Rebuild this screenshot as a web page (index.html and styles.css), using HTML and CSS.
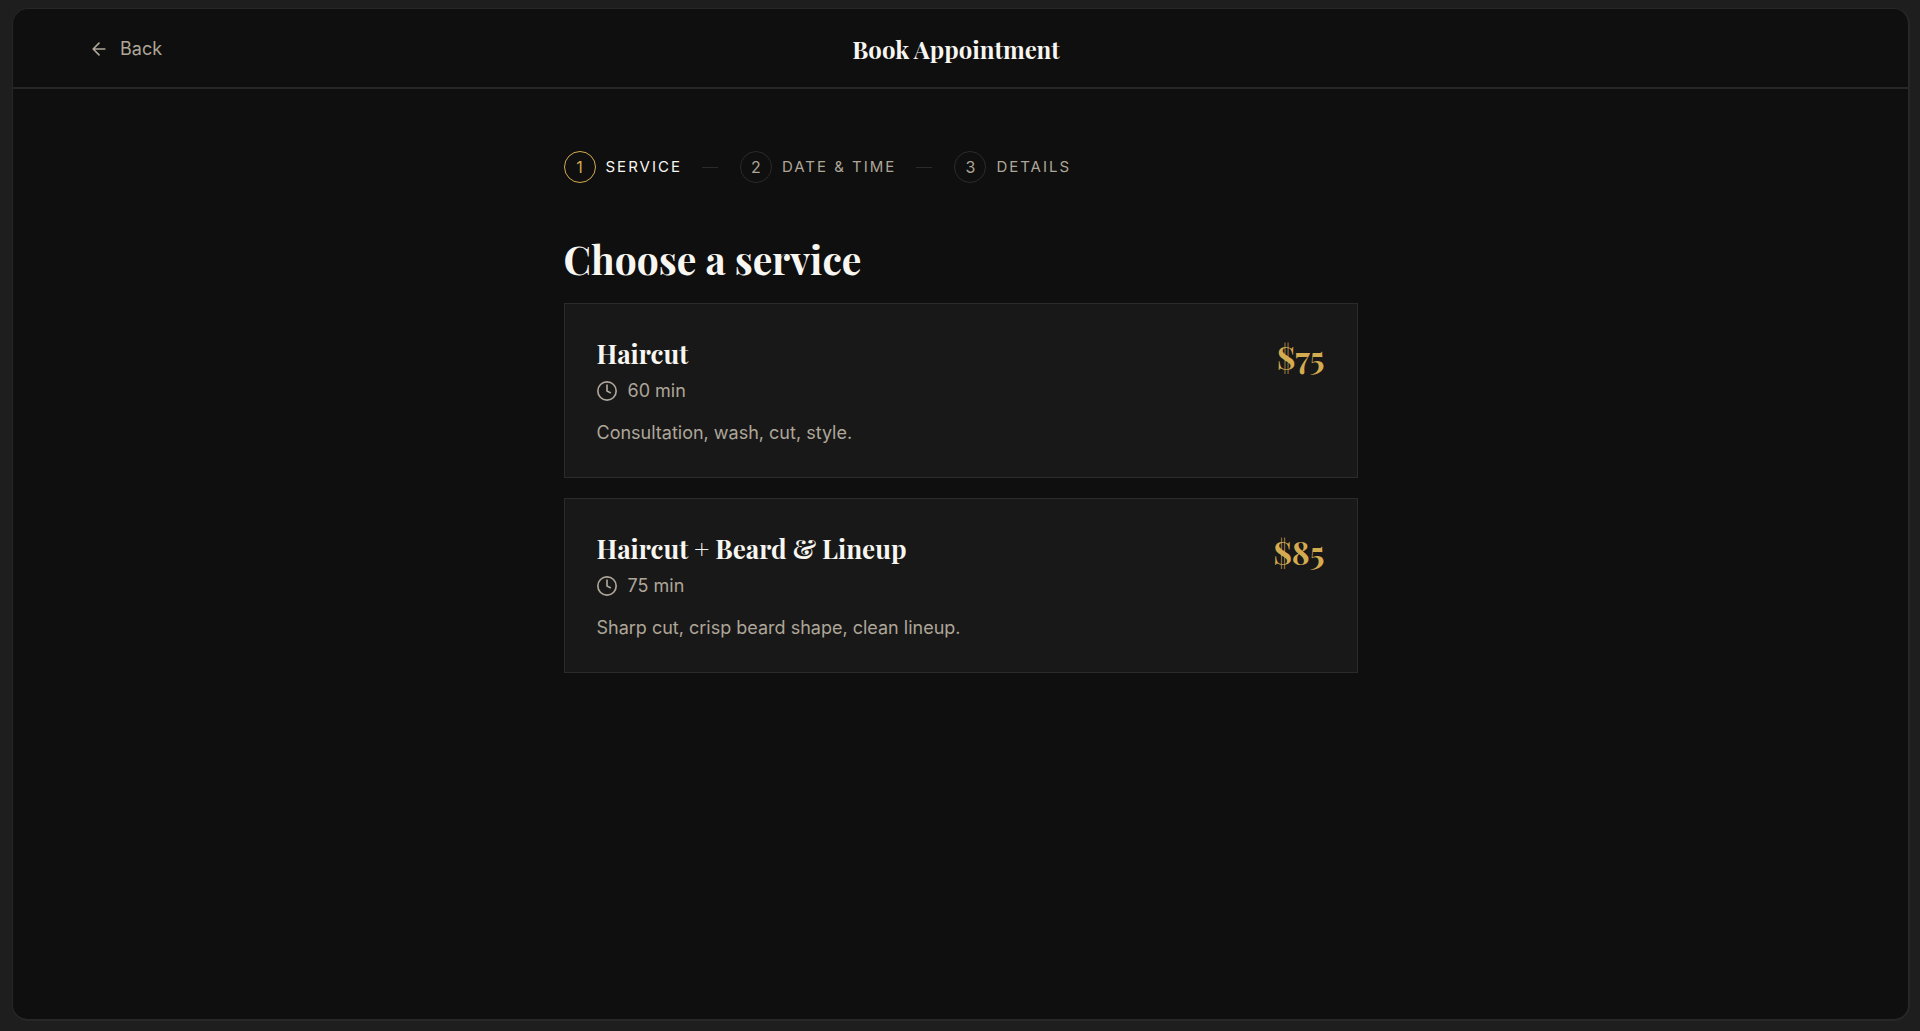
FILE: index.html
```html
<!DOCTYPE html>
<html lang="en">
<head>
<meta charset="utf-8">
<meta name="viewport" content="width=device-width, initial-scale=1">
<title>Book Appointment</title>
<link rel="stylesheet" href="styles.css">
</head>
<body>
<div class="frame">
  <header class="topbar">
    <a class="back" href="#">
      <svg class="back-icon" viewBox="0 0 24 24" aria-hidden="true"><path d="m12 19-7-7 7-7M19 12H5"/></svg>
      Back
    </a>
    <h1 class="page-title">Book Appointment</h1>
    <div class="topbar-end"></div>
  </header>
  <main class="content">
    <ol class="steps">
      <li class="step step-active" aria-current="step"><span class="step-number">1</span><span>Service</span></li>
      <li class="step"><span class="step-number">2</span><span>Date &amp; Time</span></li>
      <li class="step"><span class="step-number">3</span><span>Details</span></li>
    </ol>
    <h2 class="heading">Choose a service</h2>
    <div class="services">
      <button class="service" type="button">
        <span class="service-info">
          <span class="service-name">Haircut</span>
          <span class="service-time"><svg class="clock" viewBox="0 0 24 24" aria-hidden="true"><circle cx="12" cy="12" r="11"/><path d="M12 5v7l4 2"/></svg>60 min</span>
          <span class="service-text">Consultation, wash, cut, style.</span>
        </span>
        <span class="price">$75</span>
      </button>
      <button class="service" type="button">
        <span class="service-info">
          <span class="service-name">Haircut + Beard &amp; Lineup</span>
          <span class="service-time"><svg class="clock" viewBox="0 0 24 24" aria-hidden="true"><circle cx="12" cy="12" r="11"/><path d="M12 5v7l4 2"/></svg>75 min</span>
          <span class="service-text">Sharp cut, crisp beard shape, clean lineup.</span>
        </span>
        <span class="price">$85</span>
      </button>
    </div>
  </main>
</div>
</body>
</html>
```
FILE: styles.css
```css
:root {
  --canvas: #1e1e1e;
  --page: #0f0f0f;
  --card: #181818;
  --line: #272727;
  --text: #f8f6f1;
  --muted: #aea698;
  --gold: #d4ab50;
  --serif: "Playfair Display", "Liberation Serif", serif;
}

* { box-sizing: border-box; }

body {
  margin: 0;
  padding: 8px 10px 10px 12px;
  background: var(--canvas);
  color: var(--text);
  font-family: Inter, "Liberation Sans", sans-serif;
  font-size: 18px;
  line-height: 28px;
}

.frame {
  min-height: calc(100vh - 18px);
  overflow: hidden;
  background: var(--page);
  border: 2px solid var(--line);
  border-top-width: 1px;
  border-left-width: 1px;
  border-radius: 16px;
}

.topbar {
  display: flex;
  align-items: center;
  justify-content: space-between;
  min-height: 80px;
  padding: 2px 76px 0;
  border-bottom: 2px solid var(--line);
}

.back {
  display: flex;
  align-items: center;
  gap: 11px;
  color: var(--muted);
  text-decoration: none;
}

.back-icon {
  width: 20px;
  height: 20px;
  fill: none;
  stroke: currentColor;
  stroke-width: 2;
  stroke-linecap: round;
  stroke-linejoin: round;
}

.page-title {
  margin: 0;
  font: 700 24px/36px var(--serif);
}

.topbar-end { width: 82px; }

.content {
  max-width: 794px;
  margin: 0 auto;
  padding: 62px 0;
}

.steps {
  display: flex;
  gap: 22px;
  margin: 0 0 52px;
  padding: 0;
  list-style: none;
  font-size: 15px;
  line-height: 32px;
  letter-spacing: 2px;
  text-transform: uppercase;
  color: var(--muted);
}

.step {
  display: flex;
  align-items: center;
  gap: 10px;
}

.step:not(:last-child)::after {
  content: "";
  width: 16px;
  height: 1px;
  margin-left: 10px;
  background: #2b2b2b;
}

.step-active { color: var(--text); }

.step-number {
  display: flex;
  align-items: center;
  justify-content: center;
  width: 32px;
  height: 32px;
  border: 1px solid #2b2b2b;
  border-radius: 50%;
  font-size: 16px;
  letter-spacing: 0;
}

.step-active .step-number {
  color: var(--gold);
  border-color: var(--gold);
}

.heading {
  margin: 0 0 20px;
  font: 700 39px/48px var(--serif);
}

.services {
  display: grid;
  gap: 20px;
}

.service {
  display: flex;
  align-items: flex-start;
  justify-content: space-between;
  width: 100%;
  padding: 32px 32px 30px;
  background: var(--card);
  border: 1px solid #2b2b2b;
  color: var(--muted);
  font: inherit;
  text-align: left;
  cursor: pointer;
}

.service-info {
  display: flex;
  flex-direction: column;
}

.service-name {
  color: var(--text);
  font: 700 26px/36px var(--serif);
}

.service-time {
  display: flex;
  align-items: center;
  gap: 11px;
  margin: 5px 0 14px;
}

.clock {
  width: 20px;
  height: 20px;
  fill: none;
  stroke: currentColor;
  stroke-width: 2;
  stroke-linecap: round;
  stroke-linejoin: round;
}

.price {
  color: var(--gold);
  font: 700 32px/42px var(--serif);
}
```
